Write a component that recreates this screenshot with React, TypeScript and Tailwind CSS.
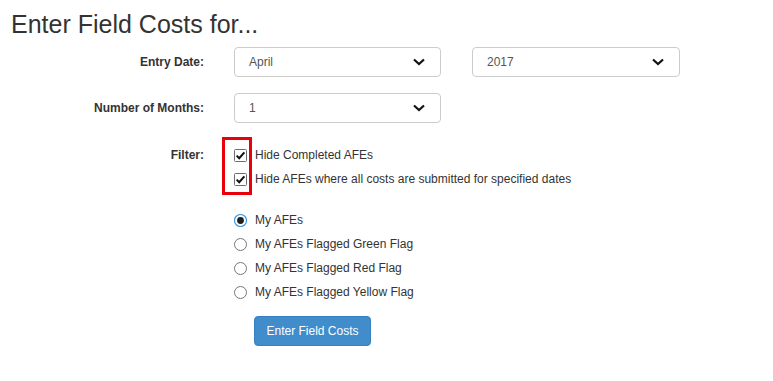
import React from 'react';

const font = { fontFamily: '"Liberation Sans", Arial, sans-serif' };

function Chevron() {
  return (
    <svg width="12" height="8" viewBox="0 0 12 8" className="shrink-0">
      <path d="M1 1.5 L6 6 L11 1.5" fill="none" stroke="#111" strokeWidth="2.2" />
    </svg>
  );
}

function Select({ value, width }: { value: string; width: string }) {
  return (
    <div
      className={`flex h-[30px] ${width} items-center justify-between rounded-[4px] border border-[#ccc] bg-white pl-[14px] pr-[15px] text-[12px] text-[#555]`}
    >
      <span>{value}</span>
      <Chevron />
    </div>
  );
}

function Checkbox() {
  return (
    <svg width="13" height="13" viewBox="0 0 13 13" className="shrink-0">
      <rect x="0.5" y="0.5" width="12" height="12" rx="1" fill="#fff" stroke="#6d6d6d" />
      <path d="M2.6 6.6 L5.2 9.2 L10.4 3.4" fill="none" stroke="#111" strokeWidth="2" />
    </svg>
  );
}

function Radio({ checked }: { checked?: boolean }) {
  return (
    <svg width="13" height="13" viewBox="0 0 13 13" className="shrink-0">
      <circle cx="6.5" cy="6.5" r="6" fill="#fff" stroke={checked ? '#3a9be6' : '#767676'} strokeWidth={checked ? 1.2 : 1} />
      {checked && <circle cx="6.5" cy="6.5" r="3.4" fill="#1e1e1e" />}
    </svg>
  );
}

export default function App() {
  const radios = ['My AFEs', 'My AFEs Flagged Green Flag', 'My AFEs Flagged Red Flag', 'My AFEs Flagged Yellow Flag'];

  return (
    <div className="min-h-screen bg-white text-[12px] text-[#333]" style={font}>
      <div className="pl-[11px] pt-[9px]">
        <h1 className="text-[25px] leading-[30px] font-normal text-[#333]">Enter Field Costs for...</h1>
      </div>

      <div className="mt-[8px] flex items-center">
        <label className="w-[204px] text-right font-bold">Entry Date:</label>
        <div className="ml-[30px] flex gap-[31px]">
          <Select value="April" width="w-[207px]" />
          <Select value="2017" width="w-[208px]" />
        </div>
      </div>

      <div className="mt-[16px] flex items-center">
        <label className="w-[204px] text-right font-bold">Number of Months:</label>
        <div className="ml-[30px]">
          <Select value="1" width="w-[207px]" />
        </div>
      </div>

      <div className="mt-[20px] flex">
        <label className="w-[204px] text-right font-bold leading-[24px]">Filter:</label>
        <div className="relative ml-[30px]">
          <div className="flex h-[24px] items-center gap-[8px]">
            <Checkbox />
            <span>Hide Completed AFEs</span>
          </div>
          <div className="flex h-[24px] items-center gap-[8px]">
            <Checkbox />
            <span>Hide AFEs where all costs are submitted for specified dates</span>
          </div>
          <div className="absolute left-[-12px] top-[-6px] h-[58px] w-[30px] border-[3px] border-[#e8000b]" />
        </div>
      </div>

      <div className="ml-[234px] mt-[17px]">
        {radios.map((r, i) => (
          <div key={r} className="flex h-[24px] items-center gap-[8px]">
            <Radio checked={i === 0} />
            <span>{r}</span>
          </div>
        ))}
      </div>

      <div className="ml-[254px] mt-[12px]">
        <button className="h-[30px] w-[117px] rounded-[4px] border border-[#3a7fbf] bg-[#418ccb] text-[12px] text-white">
          Enter Field Costs
        </button>
      </div>
    </div>
  );
}
